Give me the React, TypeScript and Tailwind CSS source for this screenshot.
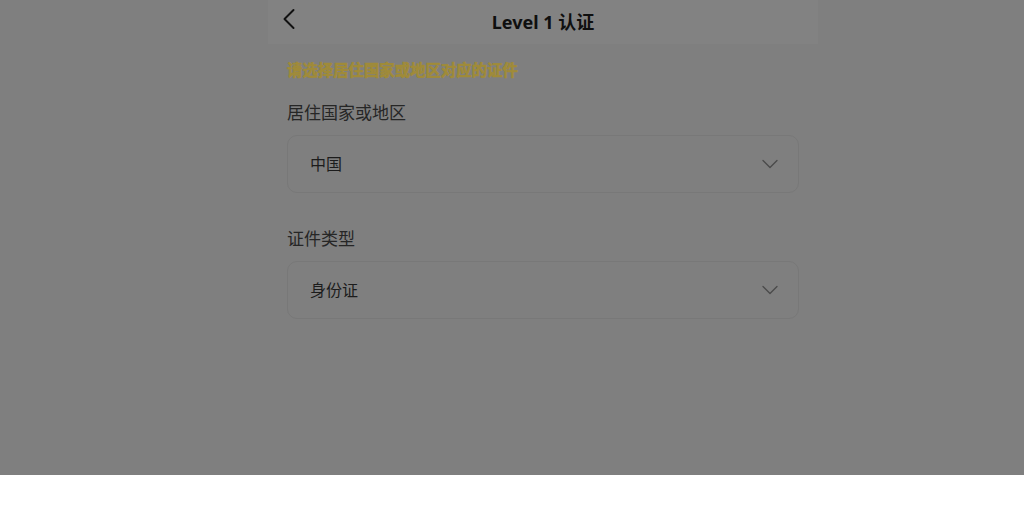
import { ChevronLeft, ChevronDown } from "lucide-react";

const font = "font-['Noto_Sans','Noto_Sans_CJK_SC',sans-serif]";

function Field({ label, value }: { label: string; value: string }) {
  return (
    <div className="flex flex-col">
      <div className="text-[17px] leading-[24px] text-[#262626]">{label}</div>
      <div className="mt-[10px] h-[58px] rounded-[10px] border border-[#787878] flex items-center justify-between pl-[22px] pr-[14px]">
        <span className="text-[16px] text-[#1c1c1c]">{value}</span>
        <ChevronDown className="w-[28px] h-[28px] text-[#4a4a4a]" strokeWidth={1.1} />
      </div>
    </div>
  );
}

export default function App() {
  return (
    <div className={`${font} w-full h-[531px] bg-white`}>
      <div className="h-[475px] bg-[#7f7f7f]">
        <div className="ml-[268px] w-[550px]">
          <div className="h-[44px] bg-[#828282] relative flex items-center justify-center">
            <ChevronLeft className="absolute left-[3px] top-[1px] w-[36px] h-[36px] text-[#111]" strokeWidth={1.3} />
            <span className="text-[18px] font-bold text-[#0f0f0f]">Level 1 认证</span>
          </div>
          <div className="px-[19px] pt-[14px] flex flex-col">
            <div className="font-['Noto_Sans_CJK_SC',sans-serif] text-[15.4px] font-bold text-[#a08b38] [-webkit-text-stroke:0.6px_#a08b38] leading-[22px]">请选择居住国家或地区对应的证件</div>
            <div className="mt-[21px]">
              <Field label="居住国家或地区" value="中国" />
            </div>
            <div className="mt-[34px]">
              <Field label="证件类型" value="身份证" />
            </div>
          </div>
        </div>
      </div>
    </div>
  );
}
